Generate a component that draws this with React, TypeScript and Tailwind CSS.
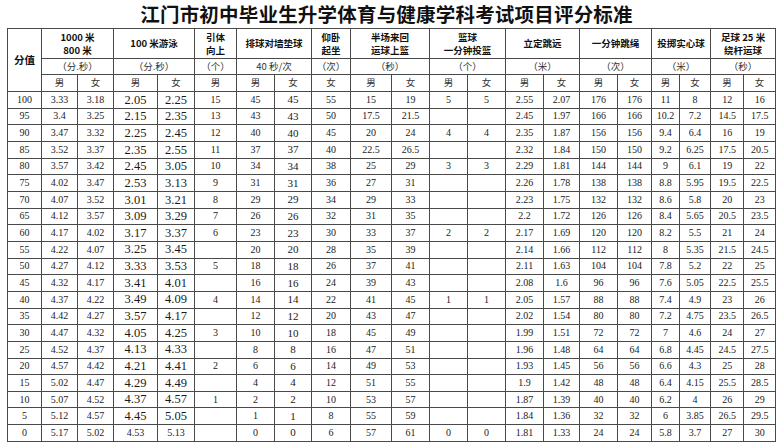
import React from 'react';

// 评分标准表：每行依次为 分值 + 20 个项目成绩（空串表示该档无对应成绩）
const rows: string[][] = [
  ['100', '3.33', '3.18', '2.05', '2.25', '15', '45', '45', '55', '15', '19', '5', '5', '2.55', '2.07', '176', '176', '11', '8', '12', '16'],
  ['95', '3.4', '3.25', '2.15', '2.35', '13', '43', '43', '50', '17.5', '21.5', '', '', '2.45', '1.97', '166', '166', '10.2', '7.2', '14.5', '17.5'],
  ['90', '3.47', '3.32', '2.25', '2.45', '12', '40', '40', '45', '20', '24', '4', '4', '2.35', '1.87', '156', '156', '9.4', '6.4', '16', '19'],
  ['85', '3.52', '3.37', '2.35', '2.55', '11', '37', '37', '40', '22.5', '26.5', '', '', '2.32', '1.84', '150', '150', '9.2', '6.25', '17.5', '20.5'],
  ['80', '3.57', '3.42', '2.45', '3.05', '10', '34', '34', '38', '25', '29', '3', '3', '2.29', '1.81', '144', '144', '9', '6.1', '19', '22'],
  ['75', '4.02', '3.47', '2.53', '3.13', '9', '31', '31', '36', '27', '31', '', '', '2.26', '1.78', '138', '138', '8.8', '5.95', '19.5', '22.5'],
  ['70', '4.07', '3.52', '3.01', '3.21', '8', '29', '29', '34', '29', '33', '', '', '2.23', '1.75', '132', '132', '8.6', '5.8', '20', '23'],
  ['65', '4.12', '3.57', '3.09', '3.29', '7', '26', '26', '32', '31', '35', '', '', '2.2', '1.72', '126', '126', '8.4', '5.65', '20.5', '23.5'],
  ['60', '4.17', '4.02', '3.17', '3.37', '6', '23', '23', '30', '33', '37', '2', '2', '2.17', '1.69', '120', '120', '8.2', '5.5', '21', '24'],
  ['55', '4.22', '4.07', '3.25', '3.45', '', '20', '20', '28', '35', '39', '', '', '2.14', '1.66', '112', '112', '8', '5.35', '21.5', '24.5'],
  ['50', '4.27', '4.12', '3.33', '3.53', '5', '18', '18', '26', '37', '41', '', '', '2.11', '1.63', '104', '104', '7.8', '5.2', '22', '25'],
  ['45', '4.32', '4.17', '3.41', '4.01', '', '16', '16', '24', '39', '43', '', '', '2.08', '1.6', '96', '96', '7.6', '5.05', '22.5', '25.5'],
  ['40', '4.37', '4.22', '3.49', '4.09', '4', '14', '14', '22', '41', '45', '1', '1', '2.05', '1.57', '88', '88', '7.4', '4.9', '23', '26'],
  ['35', '4.42', '4.27', '3.57', '4.17', '', '12', '12', '20', '43', '47', '', '', '2.02', '1.54', '80', '80', '7.2', '4.75', '23.5', '26.5'],
  ['30', '4.47', '4.32', '4.05', '4.25', '3', '10', '10', '18', '45', '49', '', '', '1.99', '1.51', '72', '72', '7', '4.6', '24', '27'],
  ['25', '4.52', '4.37', '4.13', '4.33', '', '8', '8', '16', '47', '51', '', '', '1.96', '1.48', '64', '64', '6.8', '4.45', '24.5', '27.5'],
  ['20', '4.57', '4.42', '4.21', '4.41', '2', '6', '6', '14', '49', '53', '', '', '1.93', '1.45', '56', '56', '6.6', '4.3', '25', '28'],
  ['15', '5.02', '4.47', '4.29', '4.49', '', '4', '4', '12', '51', '55', '', '', '1.9', '1.42', '48', '48', '6.4', '4.15', '25.5', '28.5'],
  ['10', '5.07', '4.52', '4.37', '4.57', '1', '2', '2', '10', '53', '57', '', '', '1.87', '1.39', '40', '40', '6.2', '4', '26', '29'],
  ['5', '5.12', '4.57', '4.45', '5.05', '', '1', '1', '8', '55', '59', '', '', '1.84', '1.36', '32', '32', '6', '3.85', '26.5', '29.5'],
  ['0', '5.17', '5.02', '4.53', '5.13', '', '0', '0', '6', '57', '61', '0', '0', '1.81', '1.33', '24', '24', '5.8', '3.7', '27', '30'],
];

const colWidths = [
  'w-[34px]', 'w-[36px]', 'w-[36px]', 'w-[44px]', 'w-[37px]', 'w-[42px]', 'w-[38px]',
  'w-[37px]', 'w-[39px]', 'w-[41px]', 'w-[38px]', 'w-[38px]', 'w-[38px]', 'w-[38px]',
  'w-[36px]', 'w-[38px]', 'w-[34px]', 'w-[28px]', 'w-[31px]', 'w-[33px]', 'w-[32px]',
];

const events = [
  { name: ['1000 米', '800 米'], unit: '（分.秒）', span: 2, sexes: ['男', '女'] },
  { name: ['100 米游泳'], unit: '（分.秒）', span: 2, sexes: ['男', '女'] },
  { name: ['引体', '向上'], unit: '（个）', span: 1, sexes: ['男'] },
  { name: ['排球对墙垫球'], unit: '40 秒/次', span: 2, sexes: ['男', '女'] },
  { name: ['仰卧', '起坐'], unit: '（次）', span: 1, sexes: ['女'] },
  { name: ['半场来回', '运球上篮'], unit: '（秒）', span: 2, sexes: ['男', '女'] },
  { name: ['篮球', '一分钟投篮'], unit: '（个）', span: 2, sexes: ['男', '女'] },
  { name: ['立定跳远'], unit: '（米）', span: 2, sexes: ['男', '女'] },
  { name: ['一分钟跳绳'], unit: '（次）', span: 2, sexes: ['男', '女'] },
  { name: ['投掷实心球'], unit: '（米）', span: 2, sexes: ['男', '女'] },
  { name: ['足球 25 米', '绕杆运球'], unit: '（秒）', span: 2, sexes: ['男', '女'] },
];

const cellBorder = 'border border-[#4a4a4a] p-0 text-center align-middle';

const cellText = (col: number, isLast: boolean) => {
  if ((col === 3 || col === 4) && !isLast) return 'text-[12.5px] text-[#1a1a1a]';
  if (col === 7) return 'text-[11px] text-[#1a1a1a]';
  return 'text-[10px] text-[#222]';
};

export default function App() {
  return (
    <div className="w-[782px] h-[447px] bg-white overflow-hidden">
      <h1 className="h-[28px] flex items-center justify-center pr-[9px] text-[19.5px] font-bold leading-none text-[#111] tracking-[0.2px] [font-family:'Noto_Sans_CJK_SC',sans-serif]">
        江门市初中毕业生升学体育与健康学科考试项目评分标准
      </h1>
      <table className="ml-[7px] w-[768px] table-fixed border-collapse border-[1.5px] border-[#333] [font-family:'Liberation_Serif','Noto_Sans_CJK_SC',serif]">
        <colgroup>
          {colWidths.map((w, i) => (
            <col key={i} className={w} />
          ))}
        </colgroup>
        <thead>
          <tr className="h-[30px]">
            <th
              rowSpan={3}
              className={`${cellBorder} text-[10.5px] font-bold text-[#111] [font-family:'Noto_Sans_CJK_SC',sans-serif]`}
            >
              分值
            </th>
            {events.map((ev, i) => (
              <th
                key={i}
                colSpan={ev.span}
                className={`${cellBorder} text-[9.5px] font-bold leading-[13px] text-[#111] [font-family:'Noto_Sans_CJK_SC',sans-serif]`}
              >
                {ev.name.map((line, j) => (
                  <div key={j}>{line}</div>
                ))}
              </th>
            ))}
          </tr>
          <tr className="h-[16px]">
            {events.map((ev, i) => (
              <th
                key={i}
                colSpan={ev.span}
                className={`${cellBorder} text-[9.5px] font-normal leading-none text-[#333] [font-family:'Noto_Sans_CJK_SC',sans-serif]`}
              >
                {ev.unit}
              </th>
            ))}
          </tr>
          <tr className="h-[17px]">
            {events.flatMap((ev, i) =>
              ev.sexes.map((s, j) => (
                <th
                  key={`${i}-${j}`}
                  className={`${cellBorder} text-[9.5px] font-normal leading-none text-[#333] [font-family:'Noto_Sans_CJK_SC',sans-serif]`}
                >
                  {s}
                </th>
              ))
            )}
          </tr>
        </thead>
        <tbody>
          {rows.map((row, r) => (
            <tr key={r} className="h-[16.66px]">
              {row.map((v, c) => (
                <td key={c} className={`${cellBorder} leading-none ${cellText(c, r === rows.length - 1)}`}>
                  {v}
                </td>
              ))}
            </tr>
          ))}
        </tbody>
      </table>
    </div>
  );
}
